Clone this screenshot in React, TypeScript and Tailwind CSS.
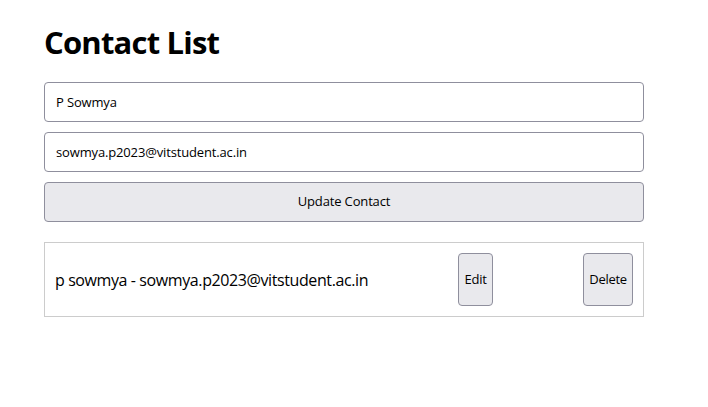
export default function App() {
  return (
    <div className="min-h-[407px] bg-white px-[44px] pt-[22px] font-['Open_Sans',sans-serif] text-black">
      <h1 className="text-[31px] font-bold leading-[40px] tracking-[-0.8px]">Contact List</h1>
      <div className="mt-[20px] flex w-[600px] flex-col gap-[10px]">
        <input
          className="h-[40px] rounded-[4px] border border-[#8f8f9d] px-[11px] text-[13px] tracking-[-0.15px] outline-none"
          defaultValue="P Sowmya"
        />
        <input
          className="h-[40px] rounded-[4px] border border-[#8f8f9d] px-[11px] text-[13px] tracking-[-0.15px] outline-none"
          defaultValue="sowmya.p2023@vitstudent.ac.in"
        />
        <button className="h-[40px] rounded-[4px] border border-[#8f8f9d] bg-[#e9e9ed] text-[13px] tracking-[-0.15px]">
          Update Contact
        </button>
      </div>
      <ul className="mt-[20px] w-[600px]">
        <li className="flex h-[75px] items-stretch justify-between border border-[#cccccc] p-[10px]">
          <span className="self-center text-[16px] tracking-[-0.4px]">
            p sowmya - sowmya.p2023@vitstudent.ac.in
          </span>
          <button className="w-[35px] rounded-[4px] border border-[#8f8f9d] bg-[#e9e9ed] text-[13px] tracking-[-0.3px]">
            Edit
          </button>
          <button className="w-[50px] rounded-[4px] border border-[#8f8f9d] bg-[#e9e9ed] text-[13px] tracking-[-0.3px]">
            Delete
          </button>
        </li>
      </ul>
    </div>
  );
}
